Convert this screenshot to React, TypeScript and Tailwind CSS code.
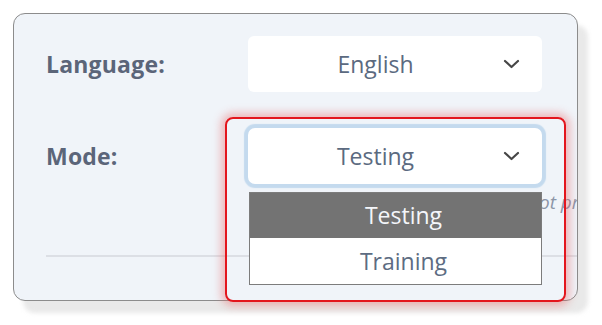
import React from "react";

const Chevron = () => (
  <svg width="17" height="10" viewBox="0 0 17 10" className="mr-[22px] shrink-0">
    <polyline points="2,2 8.5,8 15,2" fill="none" stroke="#474747" strokeWidth="2.2" strokeLinecap="round" strokeLinejoin="round" />
  </svg>
);

export default function App() {
  return (
    <div
      className="relative w-[602px] h-[325px] bg-white overflow-hidden"
      style={{ fontFamily: '"Open Sans", "Noto Sans", sans-serif' }}
    >
      <div className="absolute left-[13px] top-[13px] w-[565px] h-[288px] rounded-[12px] bg-[#e9e9e9] translate-x-[10px] translate-y-[12px] blur-[2px]" />
      <div className="relative ml-[13px] mt-[13px] w-[565px] h-[288px] rounded-[12px] border border-[#8c8c8c] bg-[#f0f4f9] overflow-hidden flex flex-col pl-[32px] pt-[22px]">
        <div className="flex items-center h-[56px]">
          <div className="w-[202px] text-[23px] tracking-[0.2px] font-bold text-[#5b6579] leading-none">Language:</div>
          <div className="w-[294px] h-[56px] bg-white rounded-[6px] flex items-center">
            <span className="flex-1 text-center text-[23px] text-[#5b6a80]">English</span>
            <Chevron />
          </div>
        </div>
        <div className="flex items-center h-[56px] mt-[36px]">
          <div className="w-[202px] text-[23px] tracking-[0.2px] font-bold text-[#5b6579] leading-none">Mode:</div>
          <div className="relative w-[294px] h-[56px]">
            <div className="w-full h-full bg-white rounded-[7px] shadow-[0_0_1px_4px_#c4daee] flex items-center">
              <span className="flex-1 text-center text-[23px] text-[#5b6a80]">Testing</span>
              <Chevron />
            </div>
          </div>
        </div>
        <div className="h-[24px] mt-[6px] leading-[24px] whitespace-nowrap pl-[482px] text-[19px] italic text-[#8c96a8]">
          not processed
        </div>
        <div className="h-[2px] mt-[41px] mr-[-4px] bg-[#dcdfe5]" />
        <div className="absolute left-[235px] top-[178px] w-[293px] border border-[#7c7c7c] bg-white flex flex-col">
          <div className="h-[45px] bg-[#737373] flex items-center justify-center pl-[16px] text-[23px] text-[#f4f6fa]">
            Testing
          </div>
          <div className="h-[46px] bg-white flex items-center justify-center pl-[16px] text-[23px] text-[#5d6c82]">
            Training
          </div>
        </div>
      </div>
      <div className="absolute left-[225px] top-[117px] w-[341px] h-[185px] rounded-[8px] border-2 border-[#e3161d] shadow-[0_0_9px_4px_rgba(232,90,90,0.4)] pointer-events-none" />
    </div>
  );
}
